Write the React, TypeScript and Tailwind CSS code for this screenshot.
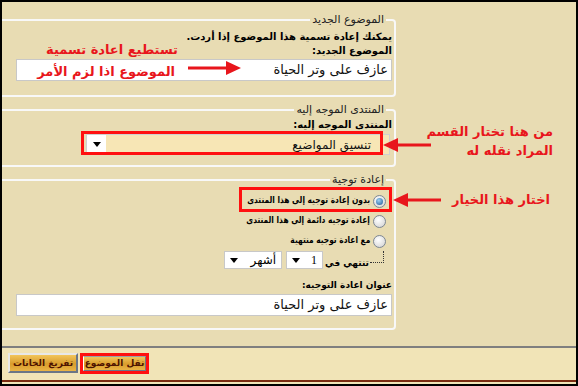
import React from "react";

// Arabic UI font (DejaVu carries the Arabic glyphs)
const ar = "font-['DejaVu_Sans',sans-serif]";

const Radio = ({ checked }: { checked?: boolean }) => (
  <span className="w-[13px] h-[13px] shrink-0 rounded-full border border-[#7d8794] bg-[radial-gradient(circle_at_40%_35%,#ffffff,#cfcfcf)] flex items-center justify-center">
    {checked && (
      <span className="w-[7px] h-[7px] rounded-full bg-[radial-gradient(circle_at_40%_35%,#9fd2f4,#1b5796)]" />
    )}
  </span>
);

const Caret = () => (
  <svg width="8" height="5" viewBox="0 0 8 5">
    <path d="M0 0h8L4 5z" fill="#000" />
  </svg>
);

const TextBox = ({ value }: { value: string }) => (
  <div className="h-[22px] w-[376px] bg-white border border-[#c8c8c8] flex items-center px-[3px] text-[13px] text-[#111]">
    {value}
  </div>
);

const Arrow = ({ dir }: { dir: "left" | "right" }) =>
  dir === "right" ? (
    <svg width="56" height="16" viewBox="0 0 56 16">
      <path d="M2 8H44" stroke="#e8161c" strokeWidth="3" />
      <path d="M40 1L55 8L40 15z" fill="#e8161c" />
    </svg>
  ) : (
    <svg width="50" height="16" viewBox="0 0 50 16">
      <path d="M12 8H49" stroke="#e8161c" strokeWidth="3" />
      <path d="M1 8L16 1V15z" fill="#e8161c" />
    </svg>
  );

const note = `absolute whitespace-nowrap text-[13px] leading-[16px] font-bold text-[#e8161c] ${ar}`;

const btn =
  "whitespace-nowrap bg-[linear-gradient(180deg,#f2c55a,#d99c2c_55%,#e9b446)] text-[9px] font-bold text-[#4e1300] leading-none";

export default function App() {
  return (
    <div className={`relative w-[578px] h-[386px] overflow-hidden border-2 border-black flex flex-col bg-[#e8dcb3] ${ar}`}>
      {/* form area */}
      <div className="flex-1 flex flex-col gap-[6px] pt-[11px] border-b-2 border-[#7f7f7f]">
        <fieldset dir="rtl" className="w-[394px] border-2 border-l-0 border-[#f8f8f8] rounded-r-[4px] pt-[3px] pb-[14px] pr-[2px]">
          <legend className="mr-[6px] px-[2px] text-[11px] leading-[14px] text-[#222]">الموضوع الجديد</legend>
          <div className="h-[14px] leading-[14px] text-[10px] font-bold text-black">يمكنك إعادة تسمية هذا الموضوع إذا أردت.</div>
          <div className="h-[14px] leading-[14px] text-[10px] font-bold text-black">الموضوع الجديد:</div>
          <div className="mt-[1px]">
            <TextBox value="عازف على وتر الحياة" />
          </div>
        </fieldset>

        <fieldset dir="rtl" className="w-[394px] border-2 border-l-0 border-[#f8f8f8] rounded-r-[4px] pt-[1px] pb-[10px] pr-[2px]">
          <legend className="mr-[6px] px-[2px] text-[11px] leading-[14px] text-[#222]">المنتدى الموجه إليه</legend>
          <div className="h-[14px] leading-[14px] text-[10px] font-bold text-black">المنتدى الموجه إليه:</div>
          <div className="mt-[2px] mr-[2px] w-[304px] h-[21px] border border-[#d0d0d0] bg-white flex items-stretch">
            <div className="flex-1 bg-[#f7e6b5] flex items-center pr-[18px] text-[12px] text-[#111]">تنسيق المواضيع</div>
            <div className="w-[19px] flex items-center justify-center">
              <Caret />
            </div>
          </div>
        </fieldset>

        <fieldset dir="rtl" className="w-[394px] border-2 border-l-0 border-[#f8f8f8] rounded-r-[4px] pt-[4px] pb-[12px] pr-[2px]">
          <legend className="mr-[6px] px-[2px] text-[11px] leading-[14px] text-[#222]">إعادة توجية</legend>
          {[
            { label: "بدون إعادة توجيه إلى هذا المنتدى", checked: true },
            { label: "إعادة توجيه دائمة إلى هذا المنتدى" },
            { label: "مع اعادة توجيه منتهية" },
          ].map((r) => (
            <div key={r.label} className="h-[20px] flex items-center gap-[3px] pr-[6px] text-[9px] font-bold text-black">
              <Radio checked={r.checked} />
              <span className="whitespace-nowrap scale-x-[0.83] origin-right">{r.label}</span>
            </div>
          ))}
          <div className="h-[18px] flex items-center pr-[8px] text-[9px] font-bold text-black">
            <span className="w-[14px] h-[12px] self-start border-r border-b border-dotted border-[#333]" />
            <span className="mr-[1px] ml-[2px] self-end leading-[12px]">تنتهي في</span>
            <div className="w-[37px] h-[18px] border border-[#c8c8c8] bg-white flex items-center justify-between px-[5px] font-normal text-[12px] font-['Liberation_Serif',serif]">
              <span>1</span>
              <Caret />
            </div>
            <div className="mr-[4px] w-[58px] h-[18px] border border-[#c8c8c8] bg-white flex items-center justify-between px-[5px] font-normal text-[12px]">
              <span>أشهر</span>
              <Caret />
            </div>
          </div>
          <div className="mt-[9px] h-[14px] leading-[14px] text-[9px] font-bold text-black">عنوان اعادة التوجيه:</div>
          <div className="mt-[2px]">
            <TextBox value="عازف على وتر الحياة" />
          </div>
        </fieldset>
      </div>

      {/* button bar */}
      <div className="h-[36px] bg-[#f1e4b7]">
        <div className="h-[34px] border-b-2 border-[#7a2a10] flex items-start gap-[2px] pt-[5px] pl-[6px]">
          <button className={`w-[70px] h-[20px] border-2 border-t-[#e8e8e8] border-l-[#e8e8e8] border-b-[#6b7686] border-r-[#6b7686] ${btn}`}>
            تفريغ الخانات
          </button>
          <div className="w-[69px] h-[21px] border-[3px] border-[#ff1010] flex">
            <button className={`flex-1 border border-t-[#9aa0a8] border-l-white border-b-[#6b7686] border-r-[#6b7686] ${btn}`}>
              نقل الموضوع
            </button>
          </div>
        </div>
      </div>

      {/* annotations */}
      <div className="absolute left-[79px] top-[129px] w-[302px] h-[24px] border-[3px] border-[#ff1010]" />
      <div className="absolute left-[237px] top-[185px] w-[153px] h-[25px] border-[3px] border-[#ff1010]" />

      <div dir="rtl" className={`${note} right-[398px] top-[40px]`}>تستطيع اعادة تسمية</div>
      <div dir="rtl" className={`${note} right-[401px] top-[62px]`}>الموضوع اذا لزم الأمر</div>
      <div className="absolute left-[184px] top-[58px]">
        <Arrow dir="right" />
      </div>

      <div dir="rtl" className={`${note} right-[23px] top-[122px]`}>من هنا تختار القسم</div>
      <div dir="rtl" className={`${note} right-[23px] top-[141px]`}>المراد نقله له</div>
      <div className="absolute left-[380px] top-[135px]">
        <Arrow dir="left" />
      </div>

      <div dir="rtl" className={`${note} right-[26px] top-[190px]`}>اختار هذا الخيار</div>
      <div className="absolute left-[390px] top-[190px]">
        <Arrow dir="left" />
      </div>
    </div>
  );
}
